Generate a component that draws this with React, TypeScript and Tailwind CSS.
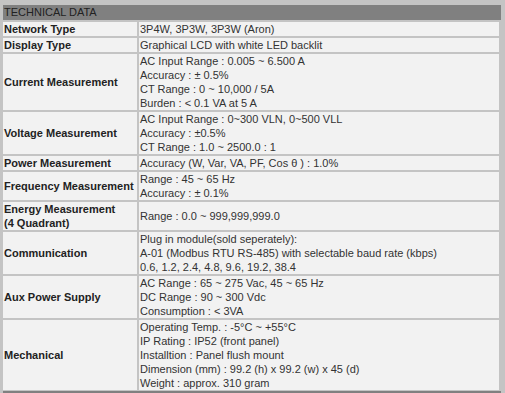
import React from 'react';

const rows: { label: React.ReactNode; lines: string[] }[] = [
  { label: 'Network Type', lines: ['3P4W, 3P3W, 3P3W (Aron)'] },
  { label: 'Display Type', lines: ['Graphical LCD with white LED backlit'] },
  {
    label: 'Current Measurement',
    lines: ['AC Input Range : 0.005 ~ 6.500 A', 'Accuracy : ± 0.5%', 'CT Range : 0 ~ 10,000 / 5A', 'Burden : < 0.1 VA at 5 A'],
  },
  {
    label: 'Voltage Measurement',
    lines: ['AC Input Range : 0~300 VLN, 0~500 VLL', 'Accuracy : ±0.5%', 'CT Range : 1.0 ~ 2500.0 : 1'],
  },
  { label: 'Power Measurement', lines: ['Accuracy (W, Var, VA, PF, Cos θ ) : 1.0%'] },
  { label: 'Frequency Measurement', lines: ['Range : 45 ~ 65 Hz', 'Accuracy : ± 0.1%'] },
  {
    label: (
      <>
        Energy Measurement
        <br />
        (4 Quadrant)
      </>
    ),
    lines: ['Range : 0.0 ~ 999,999,999.0'],
  },
  {
    label: 'Communication',
    lines: [
      'Plug in module(sold seperately):',
      'A-01 (Modbus RTU RS-485) with selectable baud rate (kbps)',
      '0.6, 1.2, 2.4, 4.8, 9.6, 19.2, 38.4',
    ],
  },
  {
    label: 'Aux Power Supply',
    lines: ['AC Range : 65 ~ 275 Vac, 45 ~ 65 Hz', 'DC Range : 90 ~ 300 Vdc', 'Consumption : < 3VA'],
  },
  {
    label: 'Mechanical',
    lines: [
      'Operating Temp. : -5°C ~ +55°C',
      'IP Rating : IP52 (front panel)',
      'Installtion : Panel flush mount',
      'Dimension (mm) : 99.2 (h) x 99.2 (w) x 45 (d)',
      'Weight : approx. 310 gram',
    ],
  },
];

export default function App() {
  return (
    <div
      className="w-[505px] h-[393px] overflow-hidden bg-[#c4c4c4] pl-[3px] pt-[5px] text-[11px] leading-[14px] text-[#333]"
      style={{ fontFamily: '"Liberation Sans", Arial, sans-serif' }}
    >
      {/* Header */}
      <div className="w-[498px] h-[15px] bg-[#808080] pl-px leading-[15px] text-[#222]">TECHNICAL DATA</div>

      {/* Spec rows */}
      <div className="mt-[2px] grid grid-cols-[134px_360px] gap-[2px]">
        {rows.map((row, i) => (
          <React.Fragment key={i}>
            <div className="bg-[#f2f2f2] pl-px flex items-center font-bold text-[#222]">
              <div>{row.label}</div>
            </div>
            <div className="bg-[#f2f2f2] pl-px flex flex-col justify-center">
              {row.lines.map((line, j) => (
                <div key={j} className="whitespace-nowrap">
                  {line}
                </div>
              ))}
            </div>
          </React.Fragment>
        ))}
      </div>
      <div className="mt-px w-[498px] h-[3px] bg-[#808080]" />
    </div>
  );
}
